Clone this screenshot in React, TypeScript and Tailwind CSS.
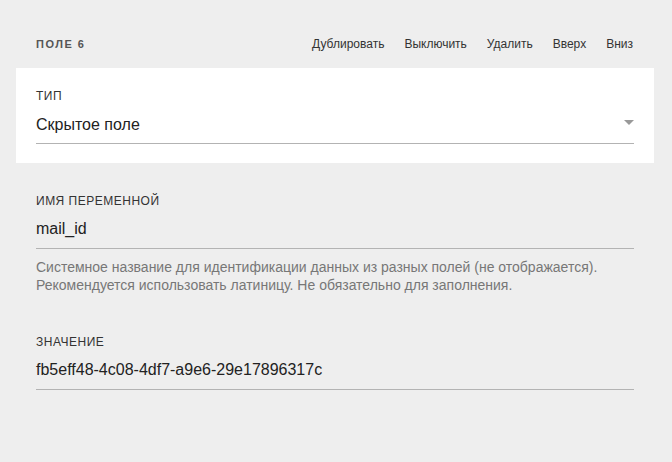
const actions = ["Дублировать", "Выключить", "Удалить", "Вверх", "Вниз"];

const Label = ({ children }: { children: React.ReactNode }) => (
  <p className="text-[12px] leading-4 uppercase tracking-[0.5px] text-[#333]">
    {children}
  </p>
);

export default function App() {
  return (
    <div
      className="min-h-[462px] bg-[#eeeeee] pb-10"
      style={{ fontFamily: '"Liberation Sans", Arial, sans-serif' }}
    >
      <div className="flex items-center justify-between pt-9 pr-[39px] pl-9">
        <h2 className="text-[11px] leading-4 font-bold uppercase tracking-[1.5px] text-[#555]">
          Поле 6
        </h2>
        <div className="flex gap-[20px] text-[12px] leading-4 text-[#333]">
          {actions.map((a) => (
            <button key={a} type="button" className="cursor-pointer">
              {a}
            </button>
          ))}
        </div>
      </div>

      <section className="mt-4 mr-[18px] ml-4 bg-white px-5 pt-5 pb-[19px]">
        <Label>Тип</Label>
        <div className="mt-[9px] flex items-center justify-between border-b border-[#b3b3b3] pb-[6px]">
          <span className="text-[16px] leading-6 text-[#222]">Скрытое поле</span>
          <svg width="10" height="5" viewBox="0 0 10 5" className="-mt-[6px]">
            <path d="M0 0h10L5 5z" fill="#999" />
          </svg>
        </div>
      </section>

      <div className="pt-[30px] pr-[38px] pl-9">
        <Label>Имя переменной</Label>
        <div className="mt-2 border-b border-[#b3b3b3] pb-[7px] text-[16px] leading-6 text-[#222]">
          mail_id
        </div>
        <p className="mt-[9px] text-[14px] leading-[18px] text-[#777]">
          Системное название для идентификации данных из разных полей (не
          отображается).
          <br />
          Рекомендуется использовать латиницу. Не обязательно для заполнения.
        </p>
      </div>

      <div className="pt-[40px] pr-[38px] pl-9">
        <Label>Значение</Label>
        <div className="mt-2 border-b border-[#b3b3b3] pb-[7px] text-[16px] leading-6 text-[#222]">
          fb5eff48-4c08-4df7-a9e6-29e17896317c
        </div>
      </div>
    </div>
  );
}
